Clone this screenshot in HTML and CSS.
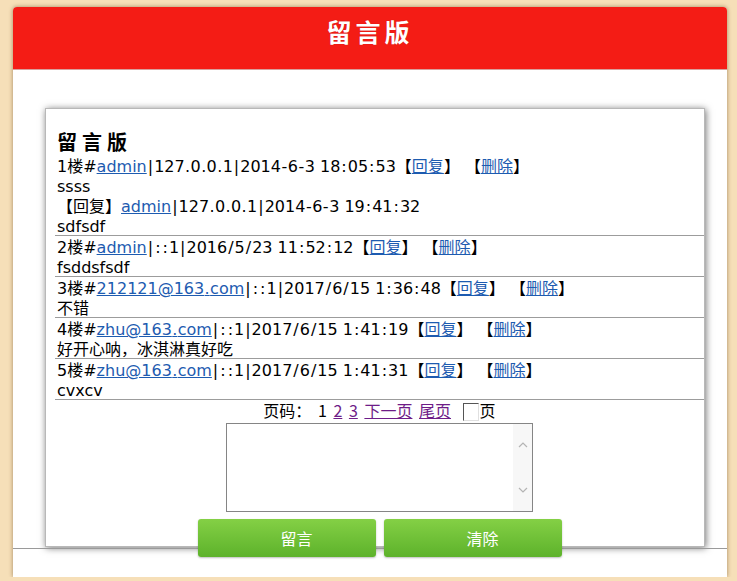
FILE: index.html
```html
<!DOCTYPE html>
<html lang="zh">
<head>
<meta charset="utf-8">
<title>留言版</title>
<link rel="stylesheet" href="styles.css">
</head>
<body>
<div class="page">
  <div class="header">留言版</div>
  <div class="board">
    <div class="title">留言版</div>
    <div class="entry tall">
      <div>1楼#<a href="#">admin</a><span class="k">|</span>127<span class="d">.</span>0<span class="d">.</span>0<span class="d">.</span>1<span class="k">|</span>2014<span class="h">-</span>6<span class="h">-</span>3 18<span class="k">:</span>05<span class="k">:</span>53【<a href="#">回复</a>】 【<a href="#">删除</a>】</div>
      <div>ssss</div>
      <div>【回复】<a href="#">admin</a><span class="k">|</span>127<span class="d">.</span>0<span class="d">.</span>0<span class="d">.</span>1<span class="k">|</span>2014<span class="h">-</span>6<span class="h">-</span>3 19<span class="k">:</span>41<span class="k">:</span>32</div>
      <div>sdfsdf</div>
    </div>
    <div class="entry">
      <div>2楼#<a href="#">admin</a><span class="k">|</span><span class="k">:</span><span class="k">:</span>1<span class="k">|</span>2016<span class="k">/</span>5<span class="k">/</span>23 11<span class="k">:</span>52<span class="k">:</span>12【<a href="#">回复</a>】 【<a href="#">删除</a>】</div>
      <div>fsddsfsdf</div>
    </div>
    <div class="entry">
      <div>3楼#<a href="#">212121@163<span class="d">.</span>com</a><span class="k">|</span><span class="k">:</span><span class="k">:</span>1<span class="k">|</span>2017<span class="k">/</span>6<span class="k">/</span>15 1<span class="k">:</span>36<span class="k">:</span>48【<a href="#">回复</a>】 【<a href="#">删除</a>】</div>
      <div>不错</div>
    </div>
    <div class="entry">
      <div>4楼#<a href="#">zhu@163<span class="d">.</span>com</a><span class="k">|</span><span class="k">:</span><span class="k">:</span>1<span class="k">|</span>2017<span class="k">/</span>6<span class="k">/</span>15 1<span class="k">:</span>41<span class="k">:</span>19【<a href="#">回复</a>】 【<a href="#">删除</a>】</div>
      <div>好开心呐，冰淇淋真好吃</div>
    </div>
    <div class="entry">
      <div>5楼#<a href="#">zhu@163<span class="d">.</span>com</a><span class="k">|</span><span class="k">:</span><span class="k">:</span>1<span class="k">|</span>2017<span class="k">/</span>6<span class="k">/</span>15 1<span class="k">:</span>41<span class="k">:</span>31【<a href="#">回复</a>】 【<a href="#">删除</a>】</div>
      <div>cvxcv</div>
    </div>
    <div class="pager">页码： 1 <a class="v" href="#">2</a> <a class="v" href="#">3</a> <a class="v" href="#">下一页</a> <a class="v" href="#">尾页</a> <span class="pagebox"></span>页</div>
    <div class="ta-row">
      <div class="ta">
        <div class="ta-bar">
          <svg width="10" height="6" viewBox="0 0 10 6"><path d="M1 5 L5 1 L9 5" fill="none" stroke="#b4b4b4" stroke-width="1.2"/></svg>
          <svg width="10" height="6" viewBox="0 0 10 6"><path d="M1 1 L5 5 L9 1" fill="none" stroke="#b4b4b4" stroke-width="1.2"/></svg>
        </div>
      </div>
    </div>
    <div class="buttons">
      <div class="btn">留言</div>
      <div class="btn">清除</div>
    </div>
  </div>
  <div class="rule"></div>
</div>
</body>
</html>
```
FILE: styles.css
```css
html, body {
  margin: 0;
  padding: 0;
}
body {
  background: #f6dfb8;
  font-family: "DejaVu Sans", "Noto Sans CJK SC", sans-serif;
  font-size: 16px;
  color: #000;
}
.page {
  margin: 7px 10px 0 13px;
  width: 714px;
  height: 570px;
  background: #fff;
  border-radius: 4px 4px 0 0;
  box-shadow: 0 0 4px rgba(90, 60, 20, 0.55);
}
.header {
  height: 63px;
  box-sizing: border-box;
  padding-top: 9px;
  background: #f41c15;
  border-radius: 4px 4px 0 0;
  border-bottom: 1px solid #d9a09c;
  color: #fff;
  font-family: "Noto Sans CJK SC", sans-serif;
  font-weight: bold;
  font-size: 25px;
  line-height: 30px;
  letter-spacing: 4px;
  text-align: center;
  text-shadow: 0 0 1px rgba(120, 0, 0, 0.4);
}
.board {
  margin: 38px 22px 0 32px;
  height: 439px;
  box-sizing: border-box;
  border: 1px solid #b8b8b8;
  box-shadow: 1px 1px 7px rgba(0, 0, 0, 0.55);
  padding: 19px 0 0 9px;
  background: #fff;
}
.title {
  font-family: "Noto Sans CJK SC", sans-serif;
  font-weight: bold;
  font-size: 20px;
  line-height: 27px;
  letter-spacing: 5px;
  padding-left: 2px;
}
.entry {
  height: 38px;
  padding: 2px 0 0 2px;
  border-bottom: 1px solid #9c9c9c;
  line-height: 20px;
  white-space: nowrap;
}
.entry.tall {
  height: 78px;
}
.k {
  padding: 0 1px;
}
.d {
  padding: 0 0.4px;
}
.h {
  padding: 0 0.5px;
}
a {
  color: #1d5bb0;
  text-decoration: underline;
}
a.v {
  color: #6e1c88;
}
.pager {
  text-align: center;
  line-height: 20px;
  font-family: "Noto Sans CJK SC", sans-serif;
  font-size: 16px;
  word-spacing: 3px;
}
.pagebox {
  display: inline-block;
  width: 14px;
  height: 16px;
  vertical-align: -4px;
  margin-left: 5px;
  margin-right: 1px;
  border-top: 1px solid #555;
  border-left: 1px solid #555;
  border-right: 1px solid #e0e0e0;
  border-bottom: 1px solid #e0e0e0;
}
.ta-row {
  display: flex;
  justify-content: center;
  margin-top: 2px;
}
.ta {
  width: 307px;
  height: 89px;
  box-sizing: border-box;
  border: 1px solid #858585;
  display: flex;
  justify-content: flex-end;
}
.ta-bar {
  width: 19px;
  background: #f7f7f7;
  display: flex;
  flex-direction: column;
  justify-content: space-between;
  align-items: center;
  padding: 18px 0 18px;
}
.buttons {
  display: flex;
  justify-content: center;
  gap: 8px;
  margin-top: 7px;
}
.btn {
  width: 178px;
  height: 38px;
  box-sizing: border-box;
  padding-left: 20px;
  border-radius: 3px;
  background: linear-gradient(#84d045, #5db22b);
  box-shadow: 0 1px 2px rgba(0, 0, 0, 0.25);
  color: #fff;
  font-family: "Noto Sans CJK SC", sans-serif;
  font-size: 16px;
  line-height: 38px;
  text-align: center;
}
.rule {
  margin-top: 1px;
  border-top: 1px solid #9a9a9a;
}
```
